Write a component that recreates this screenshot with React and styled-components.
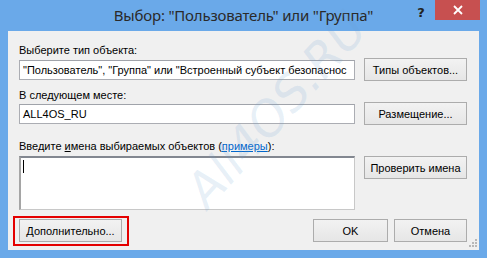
import React from "react";
import styled, { createGlobalStyle } from "styled-components";

const Global = createGlobalStyle`
  html, body { margin: 0; padding: 0; background: #6aa9e9; }
  body { width: 487px; height: 258px; overflow: hidden; }
  * { box-sizing: border-box; }
`;

const Window = styled.div`
  position: relative;
  width: 487px;
  height: 258px;
  background: #6aa9e9;
  display: flex;
  flex-direction: column;
  overflow: hidden;
  font-family: "Liberation Sans", Arial, sans-serif;
`;

const TitleBar = styled.div`
  height: 31px;
  display: grid;
  grid-template-columns: 1fr auto 1fr;
  align-items: start;
`;

const Title = styled.div`
  grid-column: 2;
  padding-top: 5px;
  font-family: "Noto Sans", sans-serif;
  font-size: 15px;
  letter-spacing: -0.2px;
  line-height: 20px;
  color: #2a2a2a;
  white-space: nowrap;
`;

const Controls = styled.div`
  grid-column: 3;
  justify-self: end;
  display: flex;
  align-items: flex-start;
  margin-right: 7px;
`;

const HelpButton = styled.div`
  width: 26px;
  height: 20px;
  margin-right: 1px;
  display: flex;
  align-items: center;
  justify-content: center;
  padding-top: 4px;
  font-family: "DejaVu Sans", sans-serif;
  font-weight: bold;
  font-size: 13px;
  color: #222;
`;

const CloseButton = styled.div`
  width: 45px;
  height: 20px;
  background: #c75050;
  display: flex;
  align-items: center;
  justify-content: center;
`;

const Client = styled.div`
  position: relative;
  flex: 1;
  margin: 0 8px 8px 8px;
  background: #f0f0f0;
  padding: 12px 12px 0 11px;
  display: flex;
  flex-direction: column;
`;

const Label = styled.div`
  font-size: 11px;
  line-height: 14px;
  height: 14px;
  color: #000;
  margin-top: ${(p) => p.$mt || 0}px;
  margin-bottom: ${(p) => p.$mb || 0}px;
  white-space: nowrap;
`;

const Link = styled.span`
  color: #0066cc;
  text-decoration: underline;
`;

const Paren = styled.span`
  color: #000;
`;

const Row = styled.div`
  display: flex;
  align-items: ${(p) => (p.$top ? "flex-start" : "center")};
  gap: 9px;
`;

const Field = styled.div`
  flex: 1;
  height: 20px;
  background: #fff;
  border: 1px solid #abadb3;
  border-top-color: #a0a3aa;
  padding: 0 3px;
  font-size: 11px;
  line-height: 18px;
  color: #000;
  white-space: nowrap;
  overflow: hidden;
`;

const TextArea = styled.div`
  flex: 1;
  height: 54px;
  background: #fff;
  border: 1px solid #c8c8c8;
  border-top: 2px solid #828790;
  border-left: 2px solid #a5a5a5;
  padding: 2px 2px;
`;

const Caret = styled.div`
  width: 1px;
  height: 13px;
  background: #000;
`;

const Button = styled.div`
  position: relative;
  width: ${(p) => p.$w || 103}px;
  height: 23px;
  flex-shrink: 0;
  border: 1px solid #acacac;
  background: linear-gradient(#f2f2f2, #e6e6e6);
  display: flex;
  align-items: center;
  justify-content: center;
  font-size: 11px;
  color: #000;
  white-space: nowrap;
`;

const Highlight = styled.div`
  position: absolute;
  left: -7px;
  top: -4px;
  width: 116px;
  height: 30px;
  border: 2px solid #e40000;
  pointer-events: none;
`;

const Footer = styled.div`
  margin-top: 9px;
  display: flex;
  align-items: center;
  gap: 6px;
`;

const Spacer = styled.div`
  flex: 1;
`;

const Grip = styled.svg`
  position: absolute;
  right: 2px;
  bottom: 3px;
`;

const Watermark = styled.div`
  position: absolute;
  left: 205px;
  top: 136px;
  height: 48px;
  line-height: 48px;
  transform: rotate(-48deg);
  transform-origin: 0 100%;
  font-family: "DejaVu Sans", sans-serif;
  font-style: italic;
  font-size: 48px;
  letter-spacing: 0px;
  color: rgba(110, 160, 210, 0.17);
  white-space: nowrap;
  pointer-events: none;
`;

export default function App() {
  return (
    <Window>
      <Global />
      <TitleBar>
        <Title>Выбор: "Пользователь" или "Группа"</Title>
        <Controls>
          <HelpButton>?</HelpButton>
          <CloseButton>
            <svg width="10" height="10" viewBox="0 0 10 10">
              <path d="M1 1 L9 9 M9 1 L1 9" stroke="#fff" strokeWidth="1.8" />
            </svg>
          </CloseButton>
        </Controls>
      </TitleBar>
      <Client>
        <Label $mb={1}>Выберите тип объекта:</Label>
        <Row>
          <Field>"Пользователь", "Группа" или "Встроенный субъект безопаснос</Field>
          <Button>Типы объектов...</Button>
        </Row>
        <Label $mt={7}>В следующем месте:</Label>
        <Row>
          <Field>ALL4OS_RU</Field>
          <Button>Размещение...</Button>
        </Row>
        <Label $mt={14} $mb={3}>
          Введите <u>и</u>мена выбираемых объектов (<Link>примеры</Link>
          <Paren>):</Paren>
        </Label>
        <Row $top>
          <TextArea>
            <Caret />
          </TextArea>
          <Button>Проверить имена</Button>
        </Row>
        <Footer>
          <Button $w={103}>
            Дополнительно...
            <Highlight />
          </Button>
          <Spacer />
          <Button $w={75}>OK</Button>
          <Button $w={73}>Отмена</Button>
        </Footer>
        <Grip width="8" height="8" viewBox="0 0 8 8">
          <g fill="#b8b8b8">
            <rect x="6" y="0" width="2" height="2" />
            <rect x="3" y="3" width="2" height="2" />
            <rect x="6" y="3" width="2" height="2" />
            <rect x="0" y="6" width="2" height="2" />
            <rect x="3" y="6" width="2" height="2" />
            <rect x="6" y="6" width="2" height="2" />
          </g>
        </Grip>
        <Watermark>All4OS.RU</Watermark>
      </Client>
    </Window>
  );
}
